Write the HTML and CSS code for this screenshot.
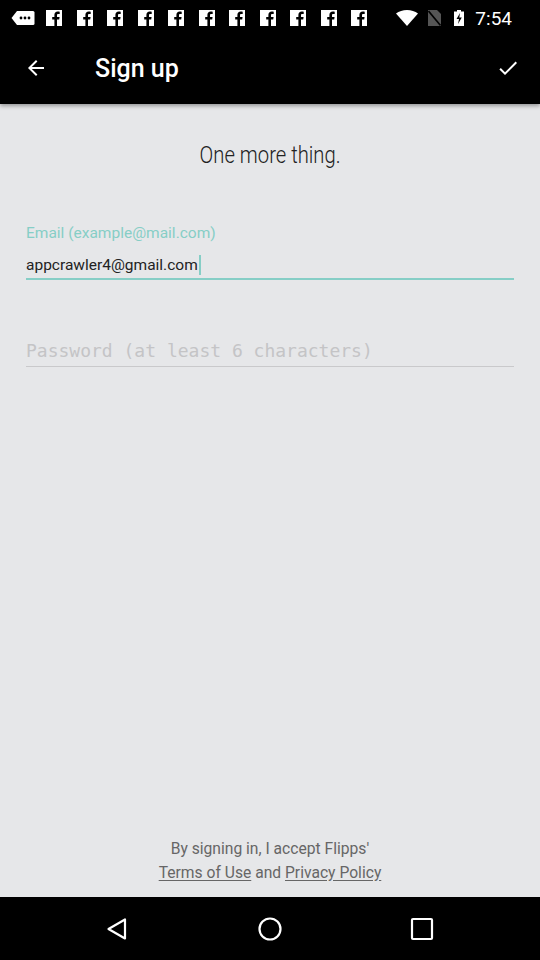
FILE: index.html
```html
<!DOCTYPE html>
<html>
<head>
<meta charset="utf-8">
<link rel="stylesheet" href="styles.css">
</head>
<body>
<div class="screen">
  <div class="statusbar">
    <div class="notifs">
      <svg class="msg" width="24" height="16" viewBox="0 0 24 16"><path d="M6 1h16a1.5 1.5 0 0 1 1.5 1.5v11a1.5 1.5 0 0 1-1.5 1.5H6L0.5 8z" fill="#fff"/><circle cx="10" cy="8" r="1.4" fill="#000"/><circle cx="14" cy="8" r="1.4" fill="#000"/><circle cx="18" cy="8" r="1.4" fill="#000"/></svg>
      <div class="fbs">
        <svg class="fb" width="16" height="16" viewBox="0 0 16 16"><rect width="16" height="16" fill="#fff"/><path d="M11 16V9.5h2.2l.4-2.6H11V5.3c0-.8.3-1.3 1.3-1.3h1.4V1.7c-.3 0-1.1-.1-2-.1-2 0-3.3 1.2-3.3 3.4v1.9H6.2v2.6h2.2V16z" fill="#000"/></svg>
        <svg class="fb" width="16" height="16" viewBox="0 0 16 16"><rect width="16" height="16" fill="#fff"/><path d="M11 16V9.5h2.2l.4-2.6H11V5.3c0-.8.3-1.3 1.3-1.3h1.4V1.7c-.3 0-1.1-.1-2-.1-2 0-3.3 1.2-3.3 3.4v1.9H6.2v2.6h2.2V16z" fill="#000"/></svg>
        <svg class="fb" width="16" height="16" viewBox="0 0 16 16"><rect width="16" height="16" fill="#fff"/><path d="M11 16V9.5h2.2l.4-2.6H11V5.3c0-.8.3-1.3 1.3-1.3h1.4V1.7c-.3 0-1.1-.1-2-.1-2 0-3.3 1.2-3.3 3.4v1.9H6.2v2.6h2.2V16z" fill="#000"/></svg>
        <svg class="fb" width="16" height="16" viewBox="0 0 16 16"><rect width="16" height="16" fill="#fff"/><path d="M11 16V9.5h2.2l.4-2.6H11V5.3c0-.8.3-1.3 1.3-1.3h1.4V1.7c-.3 0-1.1-.1-2-.1-2 0-3.3 1.2-3.3 3.4v1.9H6.2v2.6h2.2V16z" fill="#000"/></svg>
        <svg class="fb" width="16" height="16" viewBox="0 0 16 16"><rect width="16" height="16" fill="#fff"/><path d="M11 16V9.5h2.2l.4-2.6H11V5.3c0-.8.3-1.3 1.3-1.3h1.4V1.7c-.3 0-1.1-.1-2-.1-2 0-3.3 1.2-3.3 3.4v1.9H6.2v2.6h2.2V16z" fill="#000"/></svg>
        <svg class="fb" width="16" height="16" viewBox="0 0 16 16"><rect width="16" height="16" fill="#fff"/><path d="M11 16V9.5h2.2l.4-2.6H11V5.3c0-.8.3-1.3 1.3-1.3h1.4V1.7c-.3 0-1.1-.1-2-.1-2 0-3.3 1.2-3.3 3.4v1.9H6.2v2.6h2.2V16z" fill="#000"/></svg>
        <svg class="fb" width="16" height="16" viewBox="0 0 16 16"><rect width="16" height="16" fill="#fff"/><path d="M11 16V9.5h2.2l.4-2.6H11V5.3c0-.8.3-1.3 1.3-1.3h1.4V1.7c-.3 0-1.1-.1-2-.1-2 0-3.3 1.2-3.3 3.4v1.9H6.2v2.6h2.2V16z" fill="#000"/></svg>
        <svg class="fb" width="16" height="16" viewBox="0 0 16 16"><rect width="16" height="16" fill="#fff"/><path d="M11 16V9.5h2.2l.4-2.6H11V5.3c0-.8.3-1.3 1.3-1.3h1.4V1.7c-.3 0-1.1-.1-2-.1-2 0-3.3 1.2-3.3 3.4v1.9H6.2v2.6h2.2V16z" fill="#000"/></svg>
        <svg class="fb" width="16" height="16" viewBox="0 0 16 16"><rect width="16" height="16" fill="#fff"/><path d="M11 16V9.5h2.2l.4-2.6H11V5.3c0-.8.3-1.3 1.3-1.3h1.4V1.7c-.3 0-1.1-.1-2-.1-2 0-3.3 1.2-3.3 3.4v1.9H6.2v2.6h2.2V16z" fill="#000"/></svg>
        <svg class="fb" width="16" height="16" viewBox="0 0 16 16"><rect width="16" height="16" fill="#fff"/><path d="M11 16V9.5h2.2l.4-2.6H11V5.3c0-.8.3-1.3 1.3-1.3h1.4V1.7c-.3 0-1.1-.1-2-.1-2 0-3.3 1.2-3.3 3.4v1.9H6.2v2.6h2.2V16z" fill="#000"/></svg>
        <svg class="fb" width="16" height="16" viewBox="0 0 16 16"><rect width="16" height="16" fill="#fff"/><path d="M11 16V9.5h2.2l.4-2.6H11V5.3c0-.8.3-1.3 1.3-1.3h1.4V1.7c-.3 0-1.1-.1-2-.1-2 0-3.3 1.2-3.3 3.4v1.9H6.2v2.6h2.2V16z" fill="#000"/></svg>
      </div>
    </div>
    <div class="sysicons">
      <svg width="22" height="16" viewBox="0 0 22 16"><path d="M11 16L0 3.5C3 1.2 6.8 0 11 0s8 1.2 11 3.5z" fill="#fff"/></svg>
      <svg width="13" height="16" viewBox="0 0 13 16"><path d="M0 0h9l4 4v12H0z" fill="#555"/><path d="M0.5 1L12.5 15.5" stroke="#000" stroke-width="1.6"/></svg>
      <svg width="10" height="16" viewBox="0 0 10 16"><path d="M3 0h4v1.5h3V16H0V1.5h3z" fill="#fff"/><path d="M6 3L2.5 9H5l-1 5 3.8-6.5H5.3z" fill="#000"/></svg>
      <span class="time">7:54</span>
    </div>
  </div>
  <div class="toolbar">
    <svg class="tb-icon" width="24" height="24" viewBox="0 0 24 24"><path d="M20 11H7.83l5.59-5.59L12 4l-8 8 8 8 1.41-1.41L7.83 13H20v-2z" fill="#fff"/></svg>
    <span class="title">Sign up</span>
    <svg class="tb-icon check" width="24" height="24" viewBox="0 0 24 24"><path d="M9 16.2L4.8 12l-1.4 1.4L9 19 21 7l-1.4-1.4L9 16.2z" fill="#fff"/></svg>
  </div>
  <div class="content">
    <div class="heading"><span class="cond">One more thing.</span></div>
    <div class="field active">
      <div class="label">Email (example@mail.com)</div>
      <div class="value">appcrawler4@gmail.com<span class="cursor"></span></div>
    </div>
    <div class="field pw">
      <div class="placeholder">Password (at least 6 characters)</div>
    </div>
    <div class="spacer"></div>
    <div class="legal">
      <div class="cond">By signing in, I accept Flipps'</div>
      <div class="cond"><span class="link">Terms of Use</span> and <span class="link">Privacy Policy</span></div>
    </div>
  </div>
  <div class="navbar">
    <svg width="26" height="26" viewBox="0 0 26 26"><path d="M20 3.5v19L3.5 13z" fill="none" stroke="#fff" stroke-width="2.2" stroke-linejoin="round"/></svg>
    <svg width="26" height="26" viewBox="0 0 26 26"><circle cx="13" cy="13" r="10.5" fill="none" stroke="#fff" stroke-width="2.2"/></svg>
    <svg width="26" height="26" viewBox="0 0 26 26"><rect x="3" y="3" width="20" height="20" rx="1" fill="none" stroke="#fff" stroke-width="2.2"/></svg>
  </div>
</div>
</body>
</html>
```
FILE: styles.css
```css
* { box-sizing: border-box; }
html, body { margin: 0; padding: 0; }
body { font-family: Roboto, "Noto Sans", sans-serif; background: #000; }
.screen { width: 540px; height: 960px; display: flex; flex-direction: column; overflow: hidden; }

.statusbar { height: 36px; background: #000; display: flex; align-items: center; justify-content: space-between; padding: 0 28px 0 11px; }
.notifs { display: flex; align-items: center; }
.msg { margin-right: 11px; }
.fbs { display: flex; gap: 14.5px; }
.fb { display: block; }
.sysicons { display: flex; align-items: center; gap: 0; }
.sysicons svg:nth-child(1) { margin-right: 10px; }
.sysicons svg:nth-child(2) { margin-right: 13px; }
.sysicons svg:nth-child(3) { margin-right: 11px; }
.time { color: #fff; font-size: 19px; line-height: 1; }

.toolbar { height: 68px; background: #000; display: flex; align-items: center; padding: 0 20px 4px 24px; position: relative; z-index: 1; box-shadow: 0 2px 4px rgba(0,0,0,0.35); }
.tb-icon { display: block; }
.title { color: #fff; font-size: 25px; font-weight: 500; margin-left: 47px; flex: 1; }

.content { flex: 1; background: #e6e7e9; display: flex; flex-direction: column; padding: 0 26px; }
.heading { text-align: center; color: #222; font-size: 23px; font-weight: 300; margin-top: 38px; line-height: 28px; }
.cond { display: inline-block; transform: scaleX(0.92); }
.heading .cond { transform: scaleX(0.88); }

.field.active { margin-top: 53px; border-bottom: 2px solid #86cec6; padding-bottom: 3px; }
.label { color: #86cec6; font-size: 15.5px; line-height: 20px; }
.value { color: #222; font-size: 15.5px; line-height: 20px; margin-top: 12px; display: flex; align-items: center; }
.cursor { display: inline-block; width: 2px; height: 20px; background: #86cec6; margin-left: 1px; }

.field.pw { margin-top: 59px; border-bottom: 1px solid #c9c9cb; padding-bottom: 3px; }
.placeholder { font-family: "DejaVu Sans Mono", "Liberation Mono", monospace; font-size: 18px; color: #c4c4c6; line-height: 24px; }

.spacer { flex: 1; }
.legal { text-align: center; color: #666; font-size: 17px; line-height: 24px; padding-bottom: 13px; display: flex; flex-direction: column; align-items: center; }
.link { text-decoration: underline; text-underline-offset: 2px; }

.navbar { height: 63px; background: #000; display: flex; justify-content: center; align-items: center; gap: 126px; }
.navbar svg { display: block; }
```
